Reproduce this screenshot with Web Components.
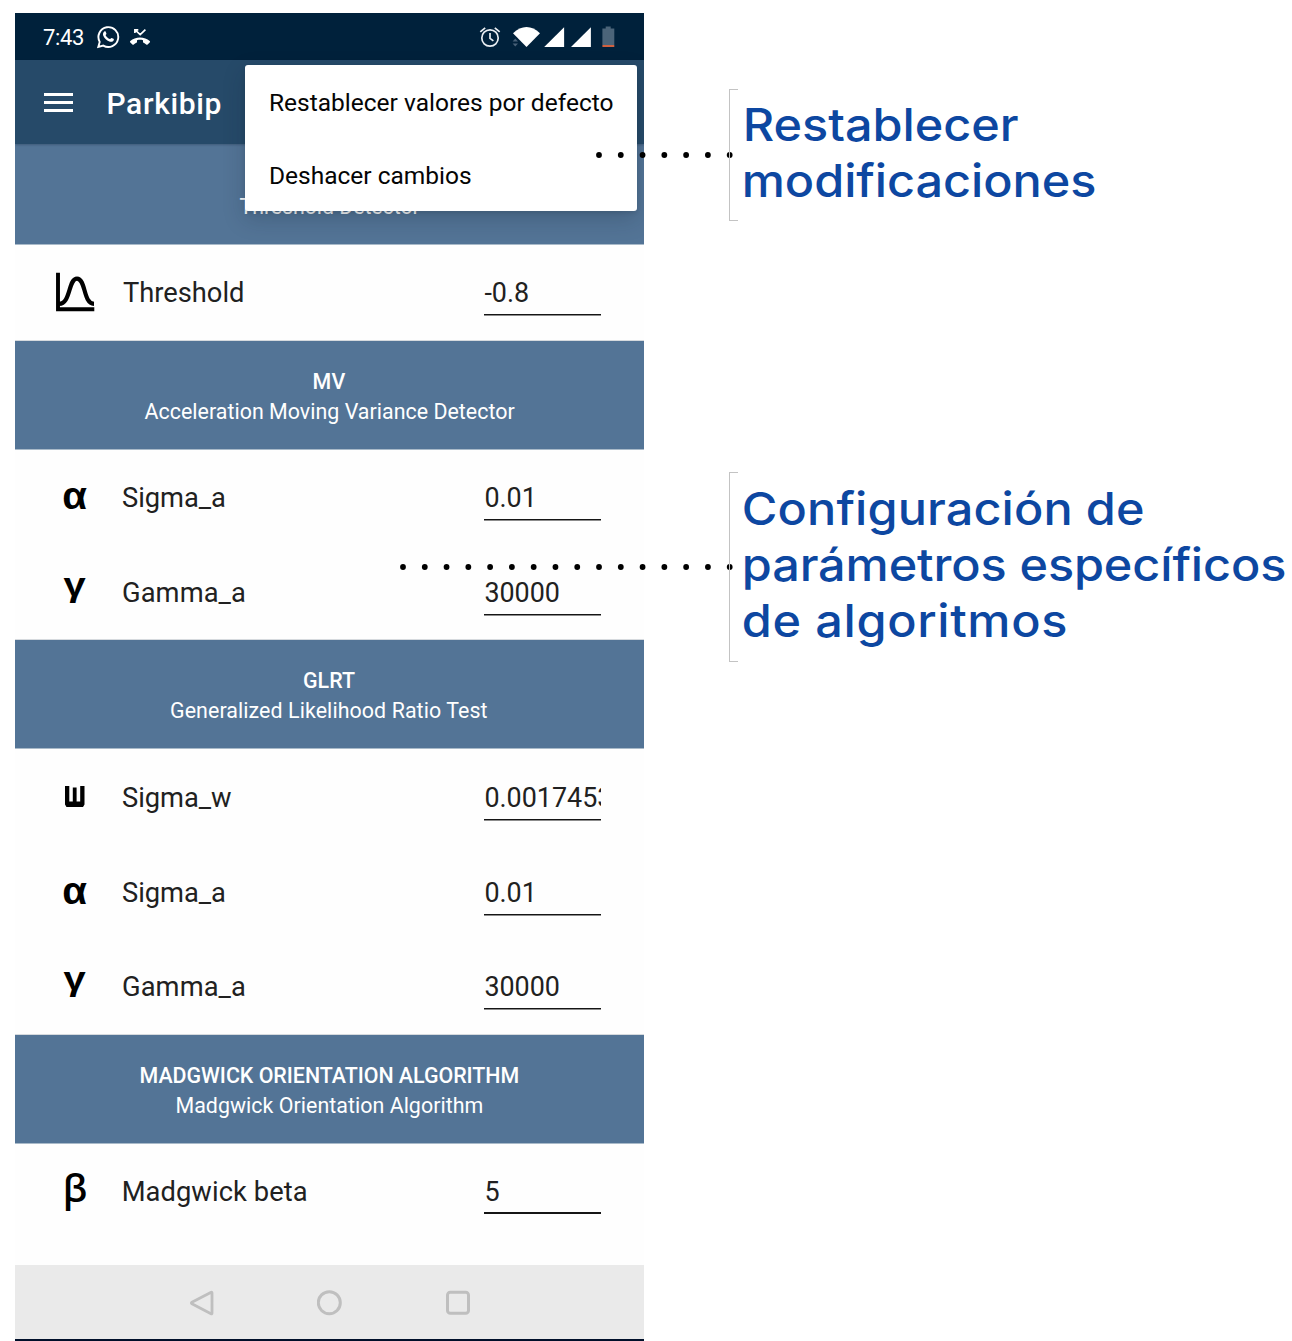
<!DOCTYPE html>
<html lang="es">
<head>
<meta charset="utf-8">
<title>Parkibip</title>
<style>
html,body{margin:0;padding:0;background:#fff}
body{width:1292px;height:1341px;overflow:hidden;font-family:Roboto,"Liberation Sans",sans-serif}
</style>
</head>
<body>
<guide-page></guide-page>
<script>
const define=(name,html,setup)=>{
  const t=document.createElement('template');
  t.innerHTML=html;
  customElements.define(name,class extends HTMLElement{
    constructor(){super();this.attachShadow({mode:'open'}).append(t.content.cloneNode(true));}
    connectedCallback(){if(setup)setup(this,this.shadowRoot);}
  });
};

// Text tracked so that its ink fills the width given in the "w" attribute;
// "sx" widens the letters themselves.
const ctx=document.createElement('canvas').getContext('2d');
define('tracked-text','<style>:host{display:block;white-space:nowrap;flex:none;transform-origin:0 50%}</style><slot></slot>',el=>{
  const sx=+(el.getAttribute('sx')||1),w=+el.getAttribute('w')/sx;
  if(!w)return;
  const cs=getComputedStyle(el),s=el.textContent;
  ctx.font=`${cs.fontWeight} ${cs.fontSize} ${cs.fontFamily}`;
  const m=ctx.measureText(s);
  const ink=m.actualBoundingBoxLeft+m.actualBoundingBoxRight;
  el.style.width=w+'px';
  el.style.textIndent=m.actualBoundingBoxLeft+'px';
  el.style.letterSpacing=((w-ink)/(s.length-1)).toFixed(3)+'px';
  if(sx!==1)el.style.transform=`scaleX(${sx})`;
});

define('status-bar',`<style>
:host{display:flex;align-items:center;height:47px;background:#00213b;color:#fff;padding:0 29px 0 28px;box-sizing:border-box}
tracked-text{font-size:22px;line-height:26px;margin:3px 13px 0 0}
svg{display:block;flex:none}
.gap{flex:1}
</style>
<tracked-text w="40">7:43</tracked-text>
<svg width="24" height="24" viewBox="0 0 24 24" style="margin-top:1px"><path d="M2.3 22 L3.7 16.9 A9.9 9.9 0 1 1 7.3 20.6 Z" fill="none" stroke="#fff" stroke-width="1.9"/><path d="M8.3 6.4c.5-.4 1.1-.3 1.3.2l.8 1.900c.2.5-.7 1.300-.8 1.700 1 1.900 2.400 3.100 4.300 3.900.5-.2 1.200-1.400 1.700-1.200l1.900.9c.5.3.4.8.2 1.400-.6 1.400-2.200 1.900-3.700 1.500-3.200-.8-5.800-3.200-6.800-6.100-.5-1.500 0-3.400 1.100-4.200z" fill="#fff"/></svg>
<svg width="22" height="20" viewBox="0 0 22 20" style="margin-left:9px;margin-top:1px"><path d="M5.900 6V2.800h3.400M6.300 3.100l4.900 4.500L16.400 2.600" fill="none" stroke="#fff" stroke-width="1.700"/><path d="M11 10.600c3.800 0 7.200 1.300 9.700 3.300.5.5.5 1 0 1.500l-2.100 2.100c-.5.4-1 .4-1.400 0-.8-.7-1.700-1.200-2.600-1.700-.4-.2-.6-.5-.6-.9v-1.700c-2-.6-4-.6-6 0v1.700c0 .4-.2.7-.6.9-1 .5-1.800 1-2.600 1.700-.4.4-.9.4-1.400 0L1.300 15.400c-.5-.5-.5-1 0-1.500C3.800 11.900 7.200 10.600 11 10.600z" fill="#fff"/></svg>
<div class="gap"></div>
<svg width="22" height="22" viewBox="0 0 22 22" style="margin-top:1px"><g fill="none" stroke="#e9eef2" stroke-width="1.700"><circle cx="11" cy="12" r="8.200"/><path d="M11 7v5.400l3.400 2.500M1.300 5.900l4.900-4.100M20.700 5.900l-4.900-4.100"/></g></svg>
<svg width="30" height="22" viewBox="0 0 30 22" style="margin-left:11px"><path d="M1 7.200Q7.500 1 14.500 1T28 7.200L14.500 21z" fill="#fff"/><path d="M.6 15.500L3.300 12.600 6 15.500zM.6 17.500L3.300 20.400 6 17.500z" fill="#486178"/></svg>
<svg width="22" height="22" viewBox="0 0 22 22" style="margin-left:2px"><path d="M.2 21L20.100 1.200V21z" fill="#fff"/></svg>
<svg width="22" height="22" viewBox="0 0 22 22" style="margin-left:5px"><path d="M0 21L19.900 1.200V21z" fill="#fff"/></svg>
<svg width="13" height="22" viewBox="0 0 13 22" style="margin-left:9px"><path d="M3.700 2.400V.4h5v2h3.600V19H.4V2.400z" fill="#4b6479"/><path d="M.4 19h11.900v2H.4z" fill="#d0603f"/></svg>
`);

define('app-bar',`<style>
:host{display:flex;height:84px;background:#264a69;color:#fff;box-shadow:0 1px 2px rgba(0,20,40,.25);position:relative;box-sizing:border-box;padding-left:29px}
.m{display:flex;flex-direction:column;gap:5.500px;width:29px;padding-top:33px}
.m i{height:2.500px;background:#fff}
tracked-text{font-size:30px;font-weight:500;line-height:34px;margin:27px 0 0 35.500px}
</style><div class="m"><i></i><i></i><i></i></div><tracked-text w="112">Parkibip</tracked-text>`);

define('section-header',`<style>
:host{display:flex;flex-direction:column;align-items:center;height:110px;box-sizing:border-box;background:#537496;color:#fff;border-top:1px solid #d6dade;border-bottom:1px solid #a9bac9;padding-top:26px;font-size:21.400px;line-height:30px}
:host([first]){height:101px;border-top:0;padding-top:48px}
::slotted([slot=title]){font-weight:500}
</style><slot name="title"></slot><slot></slot>`);

define('value-field',`<style>
:host{display:block;width:116.500px;height:38px;background:linear-gradient(#151515 0 1px,var(--edge,#8c8c8c) 1px 2px) 0 var(--rule,36px)/100% 2px no-repeat;overflow:hidden;white-space:nowrap;font-size:26.900px;line-height:30px;color:#212121;text-indent:.4px}
</style><slot></slot>`);

define('param-row',`<style>
:host{display:flex;align-items:flex-start;height:95px;box-sizing:border-box;padding:34px 43.500px 0 30px;color:#212121;font-size:27.300px;line-height:30px}
:host([up]){padding-top:33px}
:host([short]){height:94px}
.i{width:60px;height:30px;display:flex;justify-content:center;color:#000;flex:none}
.i ::slotted(span){font:700 38px/30px "Liberation Sans",sans-serif}
.i ::slotted(.alpha){transform:translateY(-2px) scale(1.06,1)}
.i ::slotted(.gamma){transform:translateY(-8px) scale(1.05,.87)}
.i ::slotted(.beta){font:600 38px/30px "Open Sans","Noto Sans",sans-serif;transform:translateY(-5.500px)}
.l{padding-left:18px;flex:1}
</style><div class="i"><slot name="icon"></slot></div><div class="l"><slot></slot></div><value-field><slot name="value"></slot></value-field>`);

define('pop-menu',`<style>
:host{display:flex;flex-direction:column;position:absolute;left:230px;top:52px;width:392px;height:146px;box-sizing:border-box;background:#fff;border-radius:3px;box-shadow:0 8px 22px rgba(20,30,50,.22),0 2px 4px rgba(0,0,0,.1);color:#050505;font-size:24.500px;line-height:30px;padding:23px 26px;gap:43px}
</style><slot></slot>`);

define('nav-bar',`<style>
:host{display:flex;justify-content:center;align-items:center;gap:102px;border-bottom:2px solid #00102a;background:#eaeaea;padding-top:1px;height:73px}
svg{display:block;fill:none;stroke:#bfbfbf;stroke-width:3}
</style>
<svg width="26" height="26" viewBox="0 0 26 26"><path d="M2.900 12.200L22.200 2.300Q23 2 23 3V23Q23 24.200 22 23.700L2.900 13.800Q1.800 13 2.900 12.200z" stroke-linejoin="round" stroke-width="2.800"/></svg>
<svg width="26" height="26" viewBox="0 0 26 26"><circle cx="12.300" cy="12.700" r="11"/></svg>
<svg width="26" height="26" viewBox="0 0 26 26"><rect x="2.500" y="2.200" width="21" height="21" rx="2.800"/></svg>`);

define('callout-note',`<style>
:host{display:block;position:relative;box-sizing:border-box;padding-left:14.500px;color:#0d47a1;font:500 45px/56px Inter,Lato,sans-serif}
:host::before{content:"";position:absolute;left:0;top:0;bottom:0;width:8px;border:1px solid #c3c3c3;border-right:0}
</style><slot></slot>`);

define('dot-leader',`<style>:host{display:block;position:absolute}svg{display:block}</style><svg height="8"></svg>`,(el,r)=>{
  const n=+el.getAttribute('count'),step=21.780,svg=r.querySelector('svg');
  svg.setAttribute('width',n*step);
  let s='';
  for(let i=0;i<n;i++)s+=`<circle cx="${(4+i*step).toFixed(2)}" cy="4" r="2.900"/>`;
  svg.innerHTML=s;
});

define('phone-screen',`<style>
:host{display:flex;flex-direction:column;width:629px;height:1328px;position:relative;overflow:hidden;background:#fefefe;flex:none}
.rest{flex:1}
svg{display:block;flex:none}
.tight{--rule:35px}
.last{--edge:#151515;--rule:35px}
</style>
<status-bar></status-bar>
<app-bar></app-bar>
<section-header first><tracked-text w="180">Threshold Detector</tracked-text></section-header>
<param-row up><svg slot="icon" width="40" height="40" viewBox="0 0 40 40" style="margin-top:-6px" fill="none" stroke="#000"><path d="M3 .7V37.300H39.300" stroke-width="3.900"/><path d="M3.500 31.800C16 32.500 13 6.600 22 6.600S28 31.600 39 31.800" stroke-width="4.200"/></svg><tracked-text w="120">Threshold</tracked-text><span slot="value">-0.8</span></param-row>
<section-header><tracked-text slot="title" w="32">MV</tracked-text><tracked-text w="370">Acceleration Moving Variance Detector</tracked-text></section-header>
<param-row up><span slot="icon" class="alpha">α</span><tracked-text w="102">Sigma_a</tracked-text><span slot="value">0.01</span></param-row>
<param-row up short><span slot="icon" class="gamma">γ</span><tracked-text w="122">Gamma_a</tracked-text><span slot="value">30000</span></param-row>
<section-header><tracked-text slot="title" w="51">GLRT</tracked-text><tracked-text w="317">Generalized Likelihood Ratio Test</tracked-text></section-header>
<param-row><svg slot="icon" width="20" height="21" viewBox="0 0 20 21" style="margin-top:3px"><path d="M0 0h4.300v15.500h3.500V1.500h3.800v14h3.600V0h4.300v18.500L18 21H1.500L0 18.500z"/></svg><tracked-text w="108">Sigma_w</tracked-text><span slot="value">0.0017453</span></param-row>
<param-row><span slot="icon" class="alpha">α</span><tracked-text w="102">Sigma_a</tracked-text><span slot="value">0.01</span></param-row>
<param-row up><span slot="icon" class="gamma">γ</span><tracked-text w="122">Gamma_a</tracked-text><span slot="value">30000</span></param-row>
<section-header><tracked-text slot="title" w="378">MADGWICK ORIENTATION ALGORITHM</tracked-text><tracked-text w="306">Madgwick Orientation Algorithm</tracked-text></section-header>
<param-row up class="last"><span slot="icon" class="beta">β</span><tracked-text w="183" style="margin-left:.7px">Madgwick beta</tracked-text><span slot="value">5</span></param-row>
<div class="rest"></div>
<nav-bar></nav-bar>
<pop-menu><tracked-text w="341.5">Restablecer valores por defecto</tracked-text><tracked-text w="200">Deshacer cambios</tracked-text></pop-menu>
`);

define('guide-page',`<style>
:host{display:flex;gap:85px;position:relative;width:1292px;height:1341px;box-sizing:border-box;padding:13px 0 0 15px;overflow:hidden}
.notes{display:flex;flex-direction:column;padding-top:76px;gap:251px;width:560px;flex:none}
.a{height:132px;padding-top:8px}
.b{height:190px;padding-top:9px}
.d1{left:595px;top:151px}
.d2{left:398.500px;top:563px}
</style>
<phone-screen></phone-screen>
<dot-leader class="d1" count="7"></dot-leader>
<dot-leader class="d2" count="16"></dot-leader>
<div class="notes">
<callout-note class="a"><tracked-text sx="1.08" w="272" style="margin-left:2px">Restablecer</tracked-text><tracked-text sx="1.08" w="350" style="margin-left:1px">modificaciones</tracked-text></callout-note>
<callout-note class="b"><tracked-text sx="1.08" w="399">Configuración de</tracked-text><tracked-text sx="1.08" w="540" style="margin-left:1px">parámetros específicos</tracked-text><tracked-text sx="1.08" w="322">de algoritmos</tracked-text></callout-note>
</div>`);
</script>
</body>
</html>
